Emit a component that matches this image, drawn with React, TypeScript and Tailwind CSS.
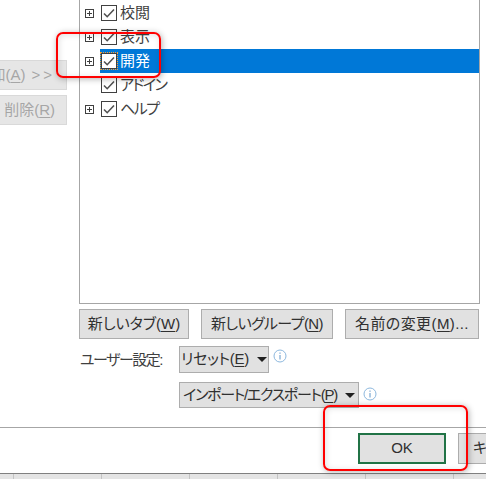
const font = "font-['Liberation_Sans','Noto_Sans_CJK_JP',sans-serif] [font-feature-settings:'palt']";

const tabs = [
  { name: "校閲", plus: true, spacing: "" },
  { name: "表示", plus: true, spacing: "" },
  { name: "開発", plus: true, selected: true, spacing: "" },
  { name: "アドイン", plus: false, spacing: "tracking-[-1.5px]" },
  { name: "ヘルプ", plus: true, spacing: "tracking-[-1.5px]" },
];

function PlusBox() {
  return (
    <svg width="9" height="9" viewBox="0 0 9 9" className="shrink-0">
      <rect x="0.5" y="0.5" width="8" height="8" fill="none" stroke="#404040" />
      <path d="M2 4.5H7M4.5 2V7" stroke="#404040" />
    </svg>
  );
}

function CheckBox({ focused }: { focused?: boolean }) {
  return (
    <div
      className={
        "flex h-4 w-4 shrink-0 items-center justify-center border border-[#404040] bg-white " +
        (focused ? "outline outline-1 outline-dotted outline-[#ffa030]" : "")
      }
    >
      <svg width="14" height="14" viewBox="0 0 14 14">
        <path d="M2 7.5L5.2 10.7L12 3.5" fill="none" stroke="#505050" strokeWidth="1.6" />
      </svg>
    </div>
  );
}

function InfoIcon() {
  return (
    <svg width="14" height="14" viewBox="0 0 14 14" className="shrink-0">
      <circle cx="7" cy="7" r="6" fill="#fff" stroke="#8db8de" />
      <path d="M7 6V10.5" stroke="#5f95c8" strokeWidth="1" />
      <path d="M7 3.5V4.8" stroke="#5f95c8" strokeWidth="1" />
    </svg>
  );
}

function Caret() {
  return <span className="ml-2 h-0 w-0 border-x-[5px] border-t-[5px] border-x-transparent border-t-[#202020]" />;
}

function Key({ k }: { k: string }) {
  return (
    <>
      (<span className="underline underline-offset-2">{k}</span>)
    </>
  );
}

function PushButton({ width, spacing, children }: { width: string; spacing?: string; children: React.ReactNode }) {
  return (
    <div className={"flex h-[30px] items-center justify-center border border-[#adadad] bg-[#e1e1e1] text-[15px] text-[#303030] " + width}>
      <span className={"whitespace-nowrap " + (spacing ?? "")}>{children}</span>
    </div>
  );
}

export default function App() {
  return (
    <div className={"relative flex h-[479px] w-[486px] flex-col overflow-hidden bg-white " + font}>
      <div className="flex">
        {/* left side buttons are cut by the crop */}
        <div className="flex w-[79px] shrink-0 flex-col gap-[5px] pt-[60px]">
          <div className="flex h-[30px] w-[67px] items-center justify-end overflow-hidden border border-l-0 border-[#d9d9d9] bg-[#e6e6e6] pr-[11px] text-[15px] text-[#a6a6a6]">
            <span className="whitespace-nowrap">
              加<Key k="A" />
              <span className="ml-[6px] tracking-[3px]">&gt;&gt;</span>
            </span>
          </div>
          <div className="flex h-[30px] w-[67px] items-center justify-end overflow-hidden border border-l-0 border-[#d9d9d9] bg-[#e6e6e6] pr-[11px] text-[15px] text-[#a6a6a6]">
            <span className="whitespace-nowrap">
              削除<Key k="R" />
            </span>
          </div>
        </div>
        <div className="h-[304px] w-[401px] border-x border-b border-[#a6a6a6] pt-px">
          {tabs.map((t) => (
            <div key={t.name} className="flex h-6 items-center pl-[5px] text-[15px] text-[#404040]">
              <div className="w-[15px] shrink-0">{t.plus && <PlusBox />}</div>
              <div className={"flex h-6 flex-1 items-center pl-px " + (t.selected ? "bg-[#0078d7] text-white" : "")}>
                <CheckBox focused={t.selected} />
                <span className={"ml-[3px] whitespace-nowrap " + t.spacing}>{t.name}</span>
              </div>
            </div>
          ))}
        </div>
      </div>

      <div className="mt-[5px] ml-[79px] flex gap-3">
        <PushButton width="w-[110px]">
          新しいタブ<Key k="W" />
        </PushButton>
        <PushButton width="w-[132px]" spacing="tracking-[-0.6px]">
          新しいグループ<Key k="N" />
        </PushButton>
        <PushButton width="w-[134px]" spacing="tracking-[0.4px]">
          名前の変更<Key k="M" />...
        </PushButton>
      </div>

      <div className="mt-[7px] flex h-[27px] items-start">
        <span className="ml-[80px] w-[99px] pt-[3px] text-[15px] leading-[22px] tracking-[-1.5px] text-[#404040]">ユーザー設定:</span>
        <div className="flex h-[27px] w-[90px] items-center justify-center border border-[#adadad] bg-[#e1e1e1] text-[15px] text-[#303030]">
          <span className="whitespace-nowrap tracking-[-0.3px]">
            リセット<Key k="E" />
          </span>
          <Caret />
        </div>
        <div className="mt-[3px] ml-1">
          <InfoIcon />
        </div>
      </div>

      <div className="mt-[9px] ml-[179px] flex h-[26px] items-start">
        <div className="flex h-[26px] w-[180px] items-center justify-center border border-[#adadad] bg-[#e1e1e1] text-[15px] text-[#303030]">
          <span className="whitespace-nowrap tracking-[-1.3px]">
            インポート/エクスポート<Key k="P" />
          </span>
          <Caret />
        </div>
        <div className="mt-[5px] ml-1">
          <InfoIcon />
        </div>
      </div>

      <div className="mt-[19px] h-[46px] border-t border-[#a6a6a6] pt-[5px]">
        <div className="flex">
          <div className="ml-[358px] flex h-[31px] w-[88px] shrink-0 items-center justify-center border-2 border-[#217346] bg-[#e1e1e1] text-[15px] text-[#303030]">
            OK
          </div>
          <div className="ml-3 flex h-[31px] w-[40px] shrink-0 items-center border border-r-0 border-[#adadad] bg-[#e1e1e1] pl-[14px] text-[15px] text-[#303030]">
            キ
          </div>
        </div>
      </div>

      {/* dialog shadow over the worksheet grid below */}
      <div className="flex h-[6px] border-t border-[#808080] bg-[#e4e4e4] pl-[13px]">
        {[0, 1, 2, 3, 4, 5].map((i) => (
          <div key={i} className="h-full w-[88px] shrink-0 border-l border-[#c4c4c4]" />
        ))}
      </div>

      {/* red annotation frames */}
      <div className="absolute top-[32px] left-[56px] h-[46px] w-[105px] rounded-[7px] border-2 border-[#ff0000] shadow-[1px_1px_6px_rgba(0,0,0,0.3),inset_1px_1px_6px_rgba(0,0,0,0.12)]" />
      <div className="absolute top-[405px] left-[323px] h-[66px] w-[145px] rounded-[7px] border-2 border-[#ff0000] shadow-[1px_1px_6px_rgba(0,0,0,0.3),inset_1px_1px_6px_rgba(0,0,0,0.12)]" />
    </div>
  );
}
